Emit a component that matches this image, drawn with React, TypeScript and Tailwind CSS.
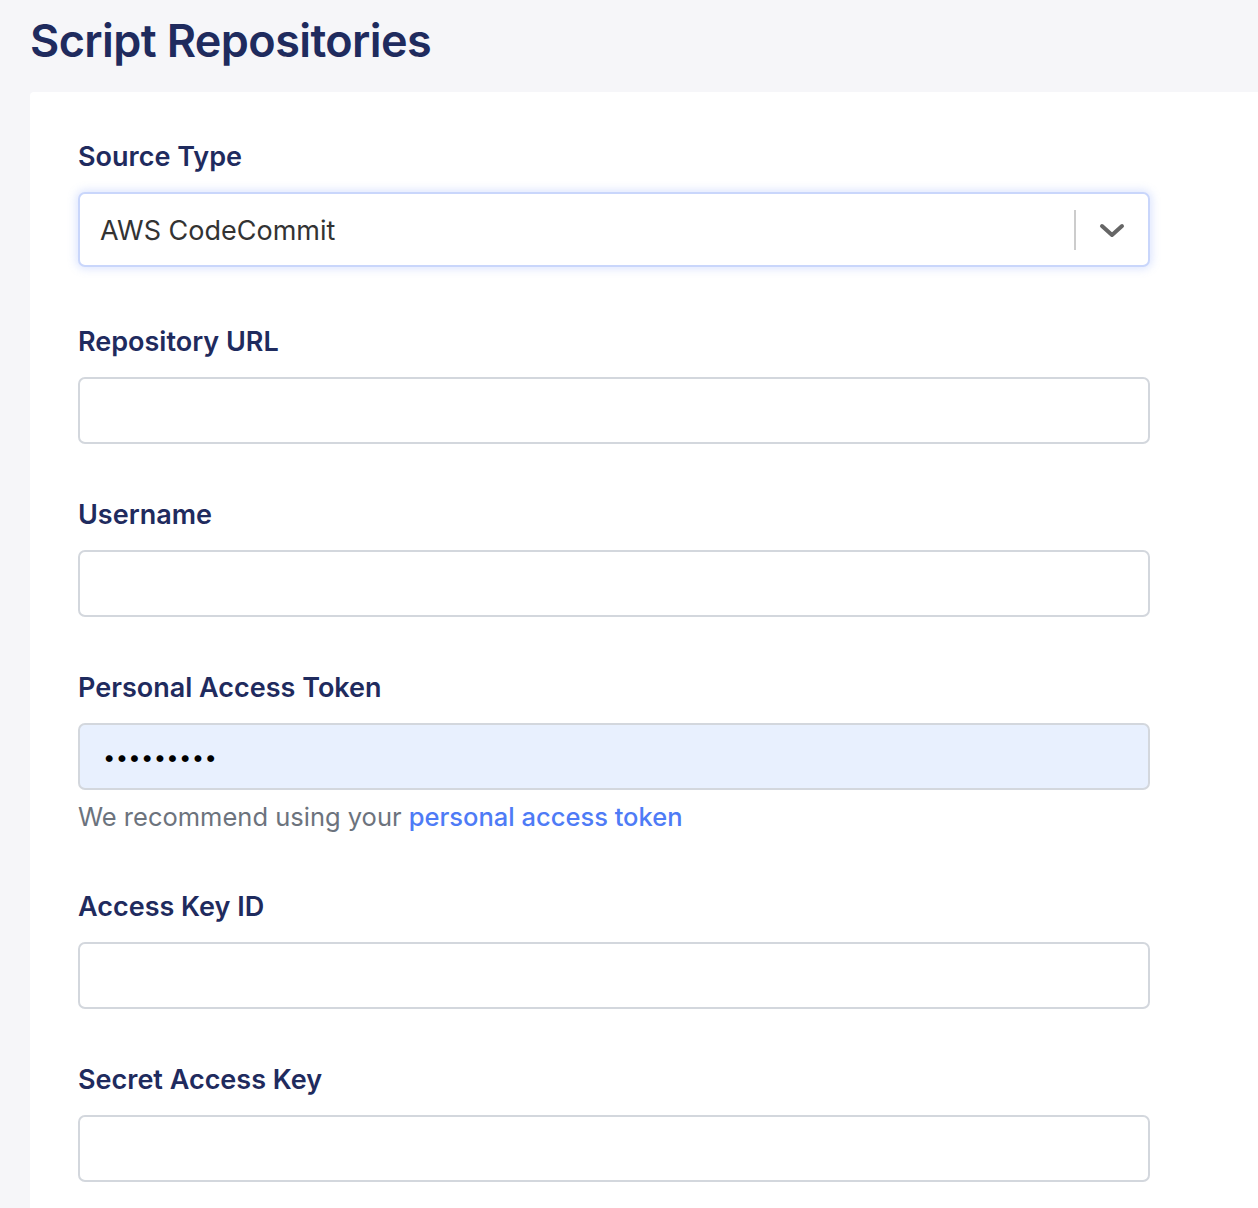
import React from "react";

function Label({ children }: { children: React.ReactNode }) {
  return (
    <div className="h-[34px] text-[27px] leading-[34px] font-semibold text-[#1f2b5e] mb-[18px]">
      {children}
    </div>
  );
}

function TextInput({ className = "" }: { className?: string }) {
  return (
    <div
      className={`h-[67px] w-[1072px] rounded-[7px] border-2 border-[#d3d7dd] bg-white ${className}`}
    />
  );
}

export default function App() {
  return (
    <div
      className="min-h-[1208px] w-full bg-[#f6f6f9] overflow-hidden"
      style={{ fontFamily: "Inter, 'Noto Sans', sans-serif" }}
    >
      <div className="h-[92px] pl-[30px] pt-[12px]">
        <h1 className="text-[45px] leading-[58px] font-semibold text-[#1f2b5e] tracking-[-0.6px]">
          Script Repositories
        </h1>
      </div>
      <div className="ml-[30px] bg-white rounded-tl-[4px] min-h-[1116px] pl-[48px] pt-[48px]">
        <Label>Source Type</Label>
        <div className="h-[75px] w-[1072px] rounded-[7px] border-2 border-[#c9d6fb] bg-white shadow-[0_0_8px_2px_rgba(120,150,250,0.25)] flex items-center">
          <span className="flex-1 pl-[20px] pt-[3px] text-[27px] text-[#333333]">AWS CodeCommit</span>
          <div className="w-[2px] h-[40px] bg-[#cccccc]" />
          <div className="w-[72px] flex items-center justify-center pt-[2px]">
            <svg width="26" height="16" viewBox="0 0 26 16">
              <path
                d="M3 3 L13 12 L23 3"
                fill="none"
                stroke="#666666"
                strokeWidth="4"
                strokeLinecap="round"
                strokeLinejoin="round"
              />
            </svg>
          </div>
        </div>

        <div className="mt-[58px]">
          <Label>Repository URL</Label>
          <TextInput />
        </div>

        <div className="mt-[54px]">
          <Label>Username</Label>
          <TextInput />
        </div>

        <div className="mt-[54px]">
          <Label>Personal Access Token</Label>
          <div className="h-[67px] w-[1072px] rounded-[7px] border-2 border-[#d3d7dd] bg-[#e8f0fe] flex items-center pl-[23px]">
            <span className="text-[22px] tracking-[0.3px] text-black leading-none">•••••••••</span>
          </div>
          <div className="mt-[11px] text-[25.5px] leading-[32px] text-[#6c737d]">
            We recommend using your{" "}
            <span className="text-[#4e7bf6] font-medium">personal access token</span>
          </div>
        </div>

        <div className="mt-[57px]">
          <Label>Access Key ID</Label>
          <TextInput />
        </div>

        <div className="mt-[54px]">
          <Label>Secret Access Key</Label>
          <TextInput />
        </div>
      </div>
    </div>
  );
}
